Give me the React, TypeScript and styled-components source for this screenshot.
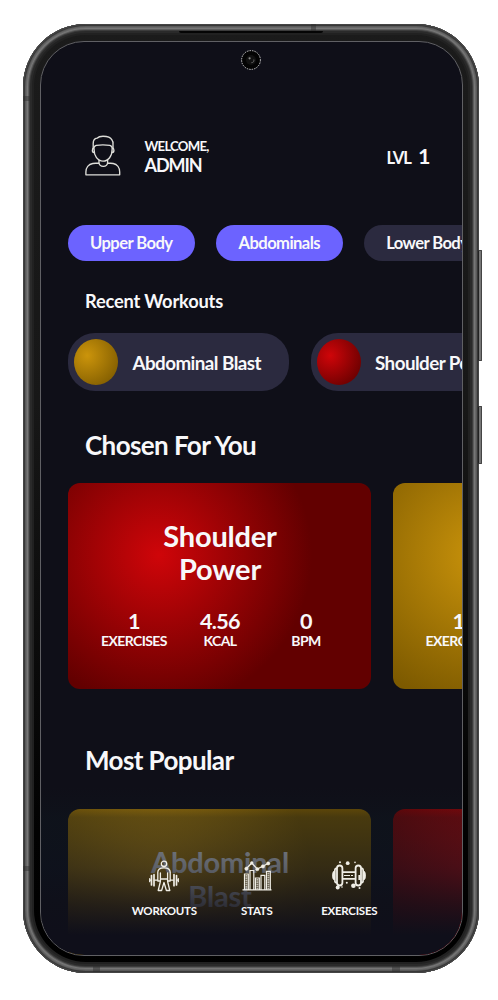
import React from "react";
import styled, { createGlobalStyle } from "styled-components";

const GlobalStyle = createGlobalStyle`
  * { box-sizing: border-box; }
  body { margin: 0; background: #fff; overflow: hidden; }
`;

const Page = styled.main`
  width: 498px;
  height: 1000px;
  padding: 24px 0 0 23px;
  background: #fff;
  font-family: Lato, sans-serif;
  font-weight: 700;
  color: #f8f8fa;
  overflow: hidden;
`;

const Phone = styled.div`
  position: relative;
  width: 456px;
  height: 949px;
  padding: 17px 16px 17px 17px;
  border-radius: 63px;
  background: linear-gradient(#1b1b1b 0%, #171717 40%, #020202 85%, #000 100%);
  box-shadow:
    inset 0 0 0 1px #454545,
    inset 0 0 0 2px #383838,
    inset 0 0 0 3px #5a5a5a,
    inset 0 0 0 4px #686868,
    inset 0 0 0 5px #777,
    inset 0 0 0 6px #5c5c5c,
    inset 0 0 0 7px #3c3c3c,
    inset 0 0 0 9px #2a2a2a,
    inset 0 0 0 11px #212121;
`;

const Speaker = styled.div`
  position: absolute;
  top: 7px;
  left: 156px;
  width: 144px;
  height: 2px;
  border-radius: 0 0 3px 3px;
  background: #050505;
`;

const SideKey = styled.div<{ $top: number; $height: number }>`
  position: absolute;
  left: 455px;
  top: ${(p) => p.$top}px;
  width: 4px;
  height: ${(p) => p.$height}px;
  border: 1px solid #444;
  border-left-color: #222;
  border-radius: 0 1px 1px 0;
  background: #777;
`;

const Antenna = styled.div<{ $x: number; $y: number; $w: number; $h: number }>`
  position: absolute;
  left: ${(p) => p.$x}px;
  top: ${(p) => p.$y}px;
  width: ${(p) => p.$w}px;
  height: ${(p) => p.$h}px;
  background: rgba(45, 45, 45, 0.45);
`;

const Screen = styled.div`
  position: relative;
  height: 100%;
  border: 1px solid #606064;
  border-radius: 44px;
  background: #0f0f18;
  overflow: hidden;
`;

const Camera = styled.svg`
  position: absolute;
  top: 8px;
  left: 200px;
`;

const Header = styled.header`
  display: flex;
  align-items: flex-start;
  height: 183px;
  padding: 93px 32px 0 43.5px;
`;

const Greeting = styled.div`
  flex: 1;
  padding: 3px 0 0 24px;
`;

const Welcome = styled.div`
  font-size: 13.2px;
  line-height: 16px;
  letter-spacing: -0.78px;
`;

const UserName = styled.div`
  font-size: 18px;
  line-height: 22px;
  letter-spacing: -1.1px;
`;

const Level = styled.div`
  display: flex;
  align-items: baseline;
  gap: 7px;
  padding-top: 8px;
  font-size: 16.6px;
  line-height: 26px;
  letter-spacing: -0.9px;
`;

const LevelValue = styled.span`
  font-size: 21.5px;
  letter-spacing: -0.5px;
`;

const Row = styled.div`
  display: flex;
  width: max-content;
  gap: 21.5px;
  padding-left: 27px;
`;

const Chip = styled.div<{ $active?: boolean; $width: number }>`
  width: ${(p) => p.$width}px;
  height: 36px;
  border-radius: 18px;
  background: ${(p) => (p.$active ? "#6c63ff" : "#2b2a3f")};
  font-size: 16.6px;
  line-height: 36px;
  letter-spacing: -0.58px;
  text-align: center;
  white-space: nowrap;
`;

const SmallHeading = styled.h3`
  height: 72px;
  margin: 0;
  padding: 29px 0 0 44px;
  font-size: 18.3px;
  line-height: 22px;
  font-weight: 700;
  letter-spacing: -0.2px;
`;

const Recent = styled.div`
  display: flex;
  align-items: center;
  width: 221px;
  height: 58px;
  padding-left: 6px;
  gap: 14.5px;
  border-radius: 27px;
  background: #2b2a3f;
  font-size: 18.8px;
  letter-spacing: -0.55px;
  white-space: nowrap;
`;

const gold = "#cb940b, #7d5a00";
const red = "#cf0509, #620000";

const Ball = styled.div<{ $tone: string }>`
  width: 44px;
  height: 46px;
  border-radius: 50%;
  background: radial-gradient(circle at 30% 36%, ${(p) => p.$tone} 88%);
`;

const Heading = styled.h2<{ $height: number; $top: number }>`
  height: ${(p) => p.$height}px;
  margin: 0;
  padding: ${(p) => p.$top}px 0 0 44px;
  font-size: 26px;
  line-height: 30px;
  font-weight: 700;
  letter-spacing: -0.6px;
`;

const Card = styled.article<{ $tone: string }>`
  width: 303px;
  height: 206px;
  padding: 36px 22px 0 23px;
  border-radius: 12px;
  background: radial-gradient(circle at 30% 35%, ${(p) => p.$tone} 61%);
  text-align: center;
`;

const CardTitle = styled.div`
  width: 150px;
  margin: 0 auto;
  font-size: 29px;
  line-height: 33.5px;
  letter-spacing: -0.2px;
`;

const Stats = styled.div`
  display: grid;
  grid-template-columns: repeat(3, 86px);
  margin-top: 23px;
`;

const StatValue = styled.div`
  font-size: 21.6px;
  line-height: 24px;
  letter-spacing: -0.7px;
`;

const StatLabel = styled.div`
  font-size: 14px;
  line-height: 16px;
  letter-spacing: -0.6px;
`;

const BottomNav = styled.nav`
  position: absolute;
  left: 0;
  right: 0;
  bottom: 0;
  display: flex;
  height: 168px;
  padding: 73px 0 0 77px;
  background: linear-gradient(
    rgba(14, 22, 30, 0) 0%,
    rgba(14, 22, 30, 0.26) 12%,
    rgba(14, 22, 30, 0.48) 18%,
    rgba(14, 21, 30, 0.56) 32%,
    rgba(14, 19, 30, 0.66) 48%,
    rgba(15, 16, 26, 0.86) 70%,
    #0f0f1a 88%
  );
`;

const NavItem = styled.div`
  display: flex;
  flex-direction: column;
  align-items: center;
  width: 92.5px;
  gap: 12px;
  font-size: 11.5px;
  line-height: 14px;
  letter-spacing: -0.25px;
`;

const UserIcon = () => (
  <svg width="36" height="42" viewBox="0 0 36 42" fill="none" stroke="#deded9" strokeWidth="1.35" strokeLinejoin="round">
    <path d="M8.2 14V8.6C8.2 5.5 9.5 3.5 12 3.2c1.5-1.6 3.8-2 6-2 4.5 0 7.6 1 8.8 3.6 1.2 1.3 1.4 3 1.2 5V14" />
    <path d="M8.8 14c0-2 .8-3.2 2.5-3.6 4.7-.7 9-.6 13.5 0 1.8.4 2.5 1.5 2.5 3.6" />
    <path d="M9 12.8c-2 .2-2.3 4.6 0 4.7M27.3 12.8c2 .2 2.3 4.6 0 4.7M9 13.8c0 7.4 3.6 12.3 9 12.3s9.2-4.9 9.2-12.3" />
    <path d="M14 25v2.8c.4 4.7 8.2 4.7 8.6 0V25M14 28l-6.2.5C3.5 29.2.9 32.7.9 37v2.8H34.7V37c0-4.3-2.6-7.8-6.5-8.5l-5.6-.5" />
  </svg>
);

const LifterIcon = () => (
  <svg width="30" height="32" viewBox="0 0 30 32" fill="none" stroke="#f0eee6" strokeWidth="1.3" strokeLinejoin="round" strokeLinecap="round">
    <circle cx="15" cy="3.8" r="2.7" />
    <path d="M8.8 21v-8.7c0-3.2 2-4.5 6.2-4.5s6.2 1.3 6.2 4.5V21M8.8 21h2.6v-8M21.2 21h-2.6v-8M11.4 21.5l-2.2 9h3.4l2.4-8 2.4 8h3.4l-2.2-9M12 19h6M.7 18.7v3M29.3 18.7v3M.7 20.2h1.5M27.8 20.2h1.5M5.8 20.2h3M21.2 20.2h3" />
    <path d="M2.5 15.5v9.4M5 14.7v11M25 14.7v11M27.5 15.5v9.4" strokeWidth="1.7" />
  </svg>
);

const StatsIcon = () => (
  <svg width="30" height="32" viewBox="0 0 30 32" fill="none" stroke="#f0eee6" strokeWidth="1.2">
    <path d="M.5 29.8h29M2.5 30V14h3.8v16M8 30V10.5h3.8V30M13.5 30V18h3.8v12M19 30V15.4h3.8V30M24.5 30V11.3h3.8V30" />
    <path d="M4.4 15v15M15.4 19v11M26.4 12.5V30" strokeWidth="2" strokeDasharray="1.7 .5" opacity=".75" />
    <path d="M4.4 8.5 9.8 3l5.4 6 5.6-2.7L26 3.4" />
    <g fill="#f0eee6" strokeWidth=".5"><circle cx="4.4" cy="8.7" r="1.7" /><circle cx="9.8" cy="3" r="1.4" /><circle cx="15.3" cy="9.2" r="1.6" /><circle cx="20.9" cy="6.4" r="1.7" /><circle cx="26.2" cy="3.4" r="1.7" /></g>
  </svg>
);

const DumbbellIcon = () => (
  <svg width="34" height="32" viewBox="0 0 34 32" fill="none" stroke="#f0eee6" strokeWidth="1.8" strokeLinejoin="round">
    <rect x="5" y="5.5" width="5.4" height="20" rx="2.7" />
    <rect x="23.6" y="5.5" width="5.4" height="20" rx="2.7" />
    <path d="M5 8.5H4.2C2.8 8.5 2.8 9.3 2.8 11.5c-1.5.2-1.8 1-1.8 4s.3 3.8 1.8 4c0 2.2 0 3 1.4 3H5M2.8 11.5v8M29 8.5h.8c1.4 0 1.4.8 1.4 3 1.5.2 1.8 1 1.8 4s-.3 3.8-1.8 4c0 2.2 0 3-1.4 3H29M31.2 11.5v8M10.4 12.2h13.2M10.4 18.8h13.2" />
    <path d="M12 15.5h9" strokeWidth="1.2" strokeDasharray="6 1" />
    <g fill="#f0eee6" stroke="none"><circle cx="15.7" cy="3.2" r="1.9" /><circle cx="8" cy="2.3" r="1" /><circle cx="23" cy="2.4" r=".8" /><circle cx="5.7" cy="27.6" r="2" /><circle cx="21.4" cy="25.8" r="2.3" /><circle cx="14.8" cy="22.7" r="1" /><circle cx="27.5" cy="28" r="1" /><circle cx="10" cy="27" r=".8" /></g>
    <path d="M27.4 15v5" strokeWidth="2" />
  </svg>
);

const WorkoutCard = ({ title, tone, kcal = "4.56" }: { title: string; tone: string; kcal?: string }) => (
  <Card $tone={tone}>
    <CardTitle>{title}</CardTitle>
    <Stats>
      <div><StatValue>1</StatValue><StatLabel>EXERCISES</StatLabel></div>
      <div><StatValue>{kcal}</StatValue><StatLabel>KCAL</StatLabel></div>
      <div><StatValue>0</StatValue><StatLabel>BPM</StatLabel></div>
    </Stats>
  </Card>
);

export default function App() {
  return (
    <Page>
      <GlobalStyle />
      <Phone>
        <Speaker />
        <Antenna $x={288} $y={0} $w={5} $h={7} />
        <Antenna $x={0} $y={72} $w={7} $h={5} />
        <Antenna $x={0} $y={842} $w={7} $h={5} />
        <Antenna $x={70} $y={942} $w={7} $h={6} />
        <Antenna $x={369} $y={942} $w={8} $h={6} />
        <SideKey $top={226} $height={111} />
        <SideKey $top={382} $height={58} />
        <Screen>
          <Camera width="20" height="20" viewBox="0 0 20 20">
            <circle cx="10" cy="10" r="9.4" fill="#030303" stroke="#ddd" strokeWidth=".9" strokeDasharray="1.5 1" />
            <circle cx="10" cy="10" r="5" fill="#111" />
            <circle cx="8.6" cy="8.3" r="1.1" fill="#888" />
            <path d="M12.8 9.5c.4 2-.4 3-2.4 3.2" fill="none" stroke="#666" />
          </Camera>
          <Header>
            <UserIcon />
            <Greeting>
              <Welcome>WELCOME,</Welcome>
              <UserName>ADMIN</UserName>
            </Greeting>
            <Level>LVL <LevelValue>1</LevelValue></Level>
          </Header>
          <Row>
            <Chip $active $width={126.5}>Upper Body</Chip>
            <Chip $active $width={126.5}>Abdominals</Chip>
            <Chip $width={126.5}>Lower Body</Chip>
          </Row>
          <SmallHeading>Recent Workouts</SmallHeading>
          <Row>
            <Recent><Ball $tone={gold} />Abdominal Blast</Recent>
            <Recent><Ball $tone={red} />Shoulder Power</Recent>
          </Row>
          <Heading $height={91.5} $top={39}>Chosen For You</Heading>
          <Row>
            <WorkoutCard title="Shoulder Power" tone={red} />
            <WorkoutCard title="Abdominal Blast" tone={gold} />
          </Row>
          <Heading $height={120.5} $top={56}>Most Popular</Heading>
          <Row>
            <WorkoutCard title="Abdominal Blast" tone={gold} />
            <WorkoutCard title="Shoulder Power" tone={red} />
          </Row>
          <BottomNav>
            <NavItem><LifterIcon />WORKOUTS</NavItem>
            <NavItem><StatsIcon />STATS</NavItem>
            <NavItem><DumbbellIcon />EXERCISES</NavItem>
          </BottomNav>
        </Screen>
      </Phone>
    </Page>
  );
}
